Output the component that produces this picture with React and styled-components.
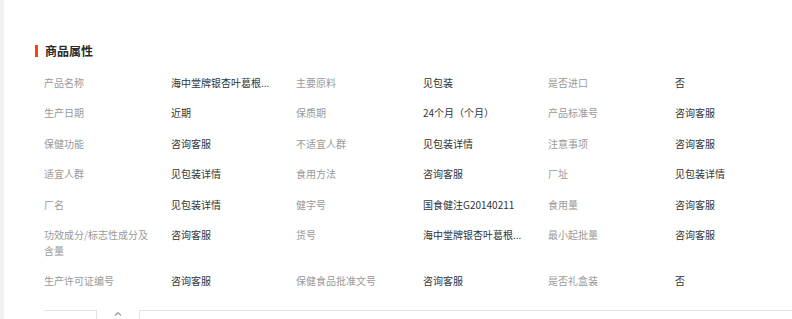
import React from "react";
import styled, { createGlobalStyle } from "styled-components";

const GlobalStyle = createGlobalStyle`
  html, body {
    margin: 0;
    padding: 0;
    background: #fff;
    font-family: "Noto Sans CJK SC", "Noto Sans", sans-serif;
  }
`;

const Page = styled.div`
  display: flex;
  width: 792px;
  height: 319px;
  overflow: hidden;
`;

const SideStrip = styled.div`
  width: 4px;
  flex-shrink: 0;
  background-color: #f2f2f2;
`;

const Main = styled.section`
  flex: 1;
  display: flex;
  flex-direction: column;
  padding: 43px 0 0 31px;
`;

const Title = styled.h3`
  display: flex;
  align-items: center;
  gap: 7px;
  margin: 0 0 8px 0;
  font-size: 12px;
  line-height: 16px;
  font-weight: 700;
  color: #2b2b2b;
  &::before {
    content: "";
    width: 3px;
    height: 12px;
    background-color: #ff4400;
  }
`;

const Grid = styled.div`
  display: grid;
  grid-template-columns: repeat(3, 127px 125px);
  margin-left: 9px;
  font-size: 10px;
  line-height: 15.5px;
`;

const Label = styled.div`
  padding: 7.5px 17px 7.5px 0;
  color: #999;
`;

const Value = styled.div`
  padding: 7.5px 0;
  color: #333;
  white-space: nowrap;
`;

const TabBar = styled.div`
  display: flex;
  align-items: flex-start;
  margin: 14px 0 0 9px;
  height: 20px;
`;

const TabBox = styled.div`
  width: ${(p) => p.$width || "auto"};
  flex: ${(p) => (p.$grow ? 1 : "none")};
  height: 100%;
  border-top: 1px solid #e3e3e3;
  border-right: ${(p) => (p.$side === "right" ? "1px solid #e3e3e3" : "none")};
  border-left: ${(p) => (p.$side === "left" ? "1px solid #e3e3e3" : "none")};
`;

const Caret = styled.div`
  width: 42px;
  display: flex;
  justify-content: center;
  padding-top: 1px;
`;

const rows = [
  ["产品名称", "海中堂牌银杏叶葛根...", "主要原料", "见包装", "是否进口", "否"],
  ["生产日期", "近期", "保质期", "24个月（个月）", "产品标准号", "咨询客服"],
  ["保健功能", "咨询客服", "不适宜人群", "见包装详情", "注意事项", "咨询客服"],
  ["适宜人群", "见包装详情", "食用方法", "咨询客服", "厂址", "见包装详情"],
  ["厂名", "见包装详情", "健字号", "国食健注G20140211", "食用量", "咨询客服"],
  ["功效成分/标志性成分及含量", "咨询客服", "货号", "海中堂牌银杏叶葛根...", "最小起批量", "咨询客服"],
  ["生产许可证编号", "咨询客服", "保健食品批准文号", "咨询客服", "是否礼盒装", "否"],
];

const App = () => {
  return (
    <Page>
      <GlobalStyle />
      <SideStrip />
      <Main>
        <Title>商品属性</Title>
        <Grid>
          {rows.map((row, i) =>
            row.map((cell, j) =>
              j % 2 === 0 ? (
                <Label key={`${i}-${j}`}>{cell}</Label>
              ) : (
                <Value key={`${i}-${j}`}>{cell}</Value>
              )
            )
          )}
        </Grid>
        <TabBar>
          <TabBox $width="52px" $side="right" />
          <Caret>
            <svg width="8" height="5" viewBox="0 0 8 5">
              <polyline points="1,4.5 4,1.5 7,4.5" fill="none" stroke="#999" strokeWidth="1.2" />
            </svg>
          </Caret>
          <TabBox $grow $side="left" />
        </TabBar>
      </Main>
    </Page>
  );
};

export default App;
